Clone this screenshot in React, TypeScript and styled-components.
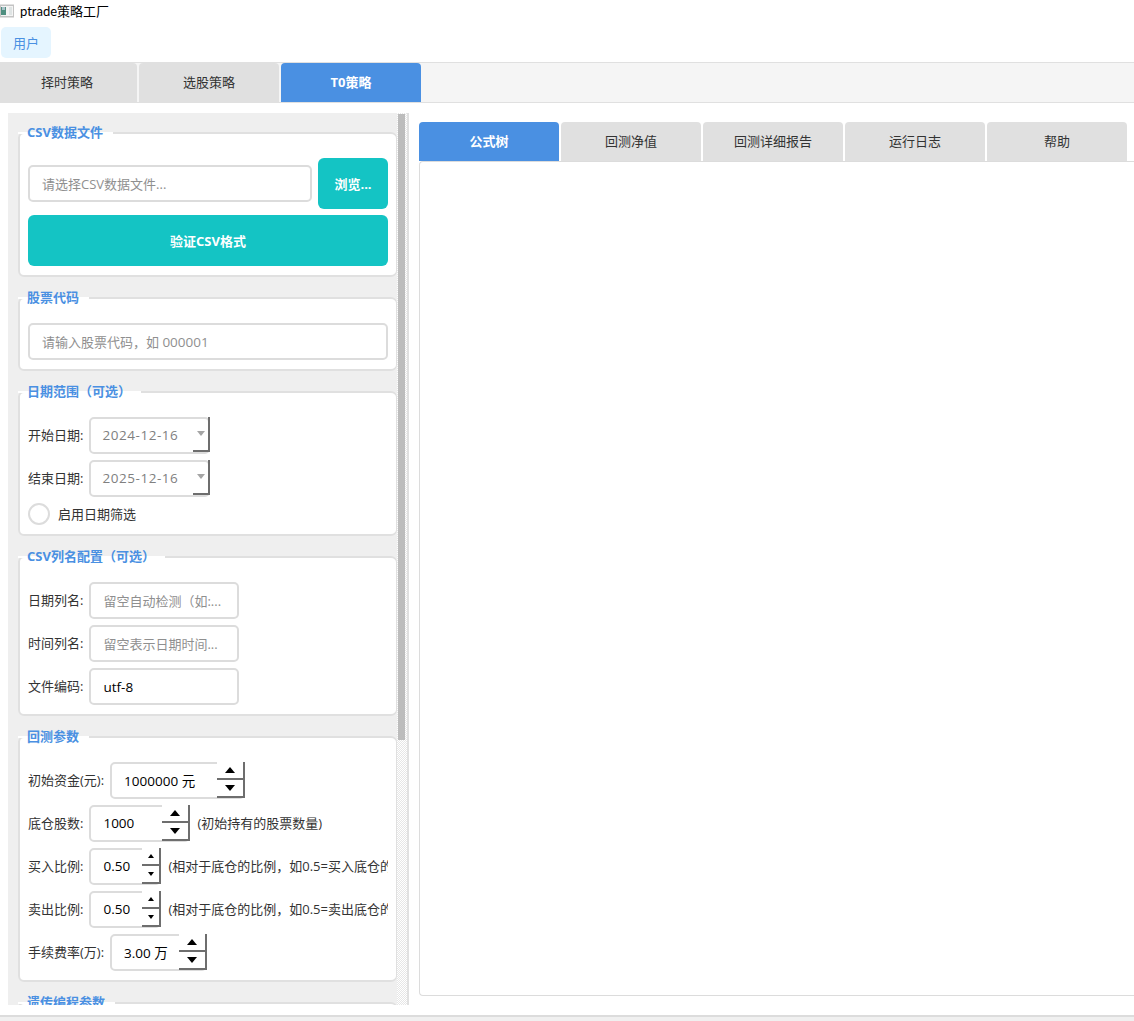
import React from 'react';
import styled, { createGlobalStyle } from 'styled-components';

const GlobalStyle = createGlobalStyle`
  html, body {
    margin: 0;
    padding: 0;
    background: #fff;
  }
  * {
    box-sizing: border-box;
  }
`;

const Page = styled.div`
  width: 1134px;
  height: 1021px;
  display: flex;
  flex-direction: column;
  overflow: hidden;
  background: #fff;
  color: #333;
  font-family: 'Open Sans', 'Noto Sans CJK SC', sans-serif;
  font-size: 13px;
`;

const TitleBar = styled.div`
  height: 26px;
  flex: none;
  display: flex;
  align-items: center;
  gap: 6px;
  padding-bottom: 5px;
  color: #000;
  font-family: Lato, 'Noto Sans CJK SC', sans-serif;
  font-size: 13px;
`;

const MenuBar = styled.div`
  height: 36px;
  flex: none;
  padding: 1px 0 0 1px;
`;

const MenuButton = styled.div`
  width: 50px;
  height: 31px;
  display: flex;
  align-items: center;
  justify-content: center;
  border-radius: 5px;
  background: #e5f5ff;
  color: #4a90e2;
`;

const MainTabBar = styled.div`
  height: 41px;
  flex: none;
  display: flex;
  gap: 2px;
  overflow: hidden;
  border-top: 1px solid #e0e0e0;
  border-bottom: 1px solid #e0e0e0;
  background: #f5f5f5;

  & > :first-child {
    margin-left: -3px;
  }
`;

const Tab = styled.div<{ $active?: boolean }>`
  width: 140px;
  height: 39px;
  flex: none;
  display: flex;
  align-items: center;
  justify-content: center;
  padding-bottom: 2px;
  border-radius: 4px 4px 0 0;
  background: ${(p) => (p.$active ? '#4a90e2' : '#e0e0e0')};
  color: ${(p) => (p.$active ? '#fff' : '#333')};
  font-weight: ${(p) => (p.$active ? 700 : 400)};
`;

const Body = styled.div`
  flex: 1;
  min-height: 0;
  display: flex;
  gap: 10px;
  padding: 10px 0 0 8px;
`;

const LeftPanel = styled.div`
  width: 401px;
  height: 892px;
  flex: none;
  display: flex;
  overflow: hidden;
  border-right: 2px solid #e0e0e0;
`;

const ScrollContent = styled.div`
  width: 389px;
  flex: none;
  display: flex;
  flex-direction: column;
  gap: 20px;
  padding: 19px 0 0 10px;
  background: #efefef;
`;

const ScrollTrack = styled.div`
  flex: 1;
  padding: 1px 2px 0 1px;
  background: repeating-conic-gradient(#e6e6e6 0% 25%, #fff 0% 50%) 0 0 / 2px 2px;
`;

const ScrollThumb = styled.div`
  height: 626px;
  background: #bcbcbc;
`;

const Group = styled.section`
  position: relative;
  z-index: 0;
  flex: none;
  width: 379px;
  padding: 24px 8px 9px 8px;
  border: 2px solid #e0e0e0;
  border-right-width: 1px;
  border-radius: 6px;
  background: #fff;
`;

const GroupTitle = styled.h3`
  position: absolute;
  top: -11px;
  left: 7px;
  margin: 0;
  color: #4a90e2;
  font-size: 13px;
  font-weight: 700;
  line-height: 18px;
  white-space: nowrap;

  &::before {
    content: '';
    position: absolute;
    z-index: -1;
    top: 9px;
    left: -9px;
    right: -10px;
    height: 2px;
    background: #fff;
  }
`;

const Stack = styled.div`
  display: flex;
  flex-direction: column;
  gap: 6px;
`;

const FileRow = styled.div`
  display: flex;
  align-items: center;
  gap: 6px;
`;

const TextInput = styled.div<{ $width?: number; $muted?: boolean }>`
  ${(p) => (p.$width ? `width: ${p.$width}px;` : 'flex: 1;')}
  height: 37px;
  flex-shrink: 0;
  display: flex;
  align-items: center;
  padding-left: 12px;
  overflow: hidden;
  border: 2px solid #dcdcdc;
  border-radius: 5px;
  background: #fff;
  color: ${(p) => (p.$muted ? '#8f8f8f' : '#000')};
  font-size: ${(p) => (p.$muted ? 13 : 13.5)}px;
  white-space: pre;
`;

const Digits = styled.span`
  font-size: 13.5px;
`;

const TealButton = styled.div<{ $width?: number }>`
  ${(p) => (p.$width ? `width: ${p.$width}px;` : '')}
  height: 51px;
  flex: none;
  display: flex;
  align-items: center;
  justify-content: center;
  border-radius: 6px;
  background: #14c4c4;
  color: #fff;
  font-weight: 700;
`;

const Row = styled.div`
  height: 37px;
  display: flex;
  align-items: center;
  gap: 6px;
  overflow: hidden;
`;

const Label = styled.span`
  flex: none;
  margin-bottom: 2px;
  color: #333;
  font-size: 13px;
  white-space: nowrap;
`;

const Note = styled.span`
  margin: 0 0 2px 1px;
  color: #333;
  font-size: 13px;
  white-space: nowrap;
`;

const Field = styled.div<{ $width: number }>`
  position: relative;
  width: ${(p) => p.$width}px;
  height: 37px;
  flex: none;
  display: flex;
  align-items: center;
  padding: 0 0 1px 12px;
  border: 2px solid #dcdcdc;
  border-radius: 5px;
  background: #fff;
  color: #000;
  font-size: 13.5px;
  white-space: nowrap;
`;

const DateField = styled(Field)`
  padding-left: 11px;
  color: #808080;
  letter-spacing: 0.55px;
`;

const DropButton = styled.div`
  position: absolute;
  top: -2px;
  right: -2px;
  width: 17px;
  height: 35px;
  display: flex;
  align-items: center;
  justify-content: center;
  border-right: 2px solid #6e6e6e;
  border-bottom: 2px solid #6e6e6e;

  &::after {
    content: '';
    border-left: 4px solid transparent;
    border-right: 4px solid transparent;
    border-top: 5px solid #a5a5a5;
  }
`;

const Spinner = styled.div<{ $small?: boolean }>`
  position: absolute;
  top: -2px;
  right: -2px;
  width: ${(p) => (p.$small ? 19 : 28)}px;
  height: 36px;
  display: flex;
  flex-direction: column;
  background: #fff;
`;

const SpinStep = styled.div<{ $down?: boolean; $small?: boolean }>`
  flex: 1;
  display: flex;
  align-items: center;
  justify-content: center;
  border-right: 2px solid #6e6e6e;
  border-bottom: 2px solid #6e6e6e;

  &::after {
    content: '';
    border-left: ${(p) => (p.$small ? 3 : 5)}px solid transparent;
    border-right: ${(p) => (p.$small ? 3 : 5)}px solid transparent;
    ${(p) => (p.$down ? 'border-top' : 'border-bottom')}: ${(p) => (p.$small ? 4 : 6)}px solid #000;
  }
`;

const CheckRow = styled.div`
  height: 22px;
  display: flex;
  align-items: center;
  gap: 8px;
`;

const CheckCircle = styled.div`
  width: 22px;
  height: 22px;
  border: 2px solid #dcdcdc;
  border-radius: 50%;
  background: #fff;
`;

const RightPanel = styled.div`
  flex: 1;
  min-width: 0;
  display: flex;
  flex-direction: column;
  padding-top: 9px;
`;

const SubTabBar = styled.div`
  height: 39px;
  flex: none;
  display: flex;
  gap: 2px;
`;

const Pane = styled.div`
  width: 730px;
  height: 835px;
  flex: none;
  border: 1px solid #dcdcdc;
  border-right: 0;
  border-radius: 4px 0 0 4px;
  background: #fff;
`;

const StatusBar = styled.div`
  height: 6px;
  flex: none;
  border-top: 2px solid #dcdcdc;
  background: #f0f0f0;
`;

const AppIcon = () => (
  <svg width='14' height='14' viewBox='0 0 14 14' style={{ flex: 'none' }}>
    <rect x='0' y='0.5' width='14' height='13' fill='#c4c4c4' />
    <rect x='1' y='2' width='12' height='10' fill='#f4f4f4' />
    <rect x='1' y='3' width='5' height='8' fill='#4f8f80' />
    <rect x='2' y='3' width='3' height='3' fill='#a9c2c9' />
    <rect x='9' y='3' width='3' height='8' fill='#dfe4e4' />
  </svg>
);

const SpinField = ({ width, value, small }: { width: number; value: string; small?: boolean }) => (
  <Field $width={width}>
    {value}
    <Spinner $small={small}>
      <SpinStep $small={small} />
      <SpinStep $small={small} $down />
    </Spinner>
  </Field>
);

const GroupBox = ({ title, children }: { title: string; children?: React.ReactNode }) => (
  <Group>
    <GroupTitle>{title}</GroupTitle>
    {children}
  </Group>
);

export default function App() {
  return (
    <Page>
      <GlobalStyle />
      <TitleBar>
        <AppIcon />
        ptrade策略工厂
      </TitleBar>
      <MenuBar>
        <MenuButton>用户</MenuButton>
      </MenuBar>
      <MainTabBar>
        <Tab>择时策略</Tab>
        <Tab>选股策略</Tab>
        <Tab $active>T0策略</Tab>
      </MainTabBar>
      <Body>
        <LeftPanel>
          <ScrollContent>
            <GroupBox title='CSV数据文件'>
              <Stack>
                <FileRow>
                  <TextInput $muted>请选择CSV数据文件...</TextInput>
                  <TealButton $width={70}>浏览...</TealButton>
                </FileRow>
                <TealButton>验证CSV格式</TealButton>
              </Stack>
            </GroupBox>
            <GroupBox title='股票代码'>
              <TextInput $muted>
                请输入股票代码，如 <Digits>000001</Digits>
              </TextInput>
            </GroupBox>
            <GroupBox title='日期范围（可选）'>
              <Stack>
                <Row>
                  <Label>开始日期:</Label>
                  <DateField $width={121}>
                    2024-12-16
                    <DropButton />
                  </DateField>
                </Row>
                <Row>
                  <Label>结束日期:</Label>
                  <DateField $width={121}>
                    2025-12-16
                    <DropButton />
                  </DateField>
                </Row>
                <CheckRow>
                  <CheckCircle />
                  <Label>启用日期筛选</Label>
                </CheckRow>
              </Stack>
            </GroupBox>
            <GroupBox title='CSV列名配置（可选）'>
              <Stack>
                <Row>
                  <Label>日期列名:</Label>
                  <TextInput $width={150} $muted>
                    留空自动检测（如:...
                  </TextInput>
                </Row>
                <Row>
                  <Label>时间列名:</Label>
                  <TextInput $width={150} $muted>
                    留空表示日期时间...
                  </TextInput>
                </Row>
                <Row>
                  <Label>文件编码:</Label>
                  <TextInput $width={150}>utf-8</TextInput>
                </Row>
              </Stack>
            </GroupBox>
            <GroupBox title='回测参数'>
              <Stack>
                <Row>
                  <Label>初始资金(元):</Label>
                  <SpinField width={135} value='1000000 元' />
                </Row>
                <Row>
                  <Label>底仓股数:</Label>
                  <SpinField width={101} value='1000' />
                  <Note>(初始持有的股票数量)</Note>
                </Row>
                <Row>
                  <Label>买入比例:</Label>
                  <SpinField width={72} value='0.50' small />
                  <Note>(相对于底仓的比例，如0.5=买入底仓的50%)</Note>
                </Row>
                <Row>
                  <Label>卖出比例:</Label>
                  <SpinField width={72} value='0.50' small />
                  <Note>(相对于底仓的比例，如0.5=卖出底仓的50%)</Note>
                </Row>
                <Row>
                  <Label>手续费率(万):</Label>
                  <SpinField width={97} value='3.00 万' />
                </Row>
              </Stack>
            </GroupBox>
            <GroupBox title='遗传编程参数' />
          </ScrollContent>
          <ScrollTrack>
            <ScrollThumb />
          </ScrollTrack>
        </LeftPanel>
        <RightPanel>
          <SubTabBar>
            <Tab $active>公式树</Tab>
            <Tab>回测净值</Tab>
            <Tab>回测详细报告</Tab>
            <Tab>运行日志</Tab>
            <Tab>帮助</Tab>
          </SubTabBar>
          <Pane />
        </RightPanel>
      </Body>
      <StatusBar />
    </Page>
  );
}
